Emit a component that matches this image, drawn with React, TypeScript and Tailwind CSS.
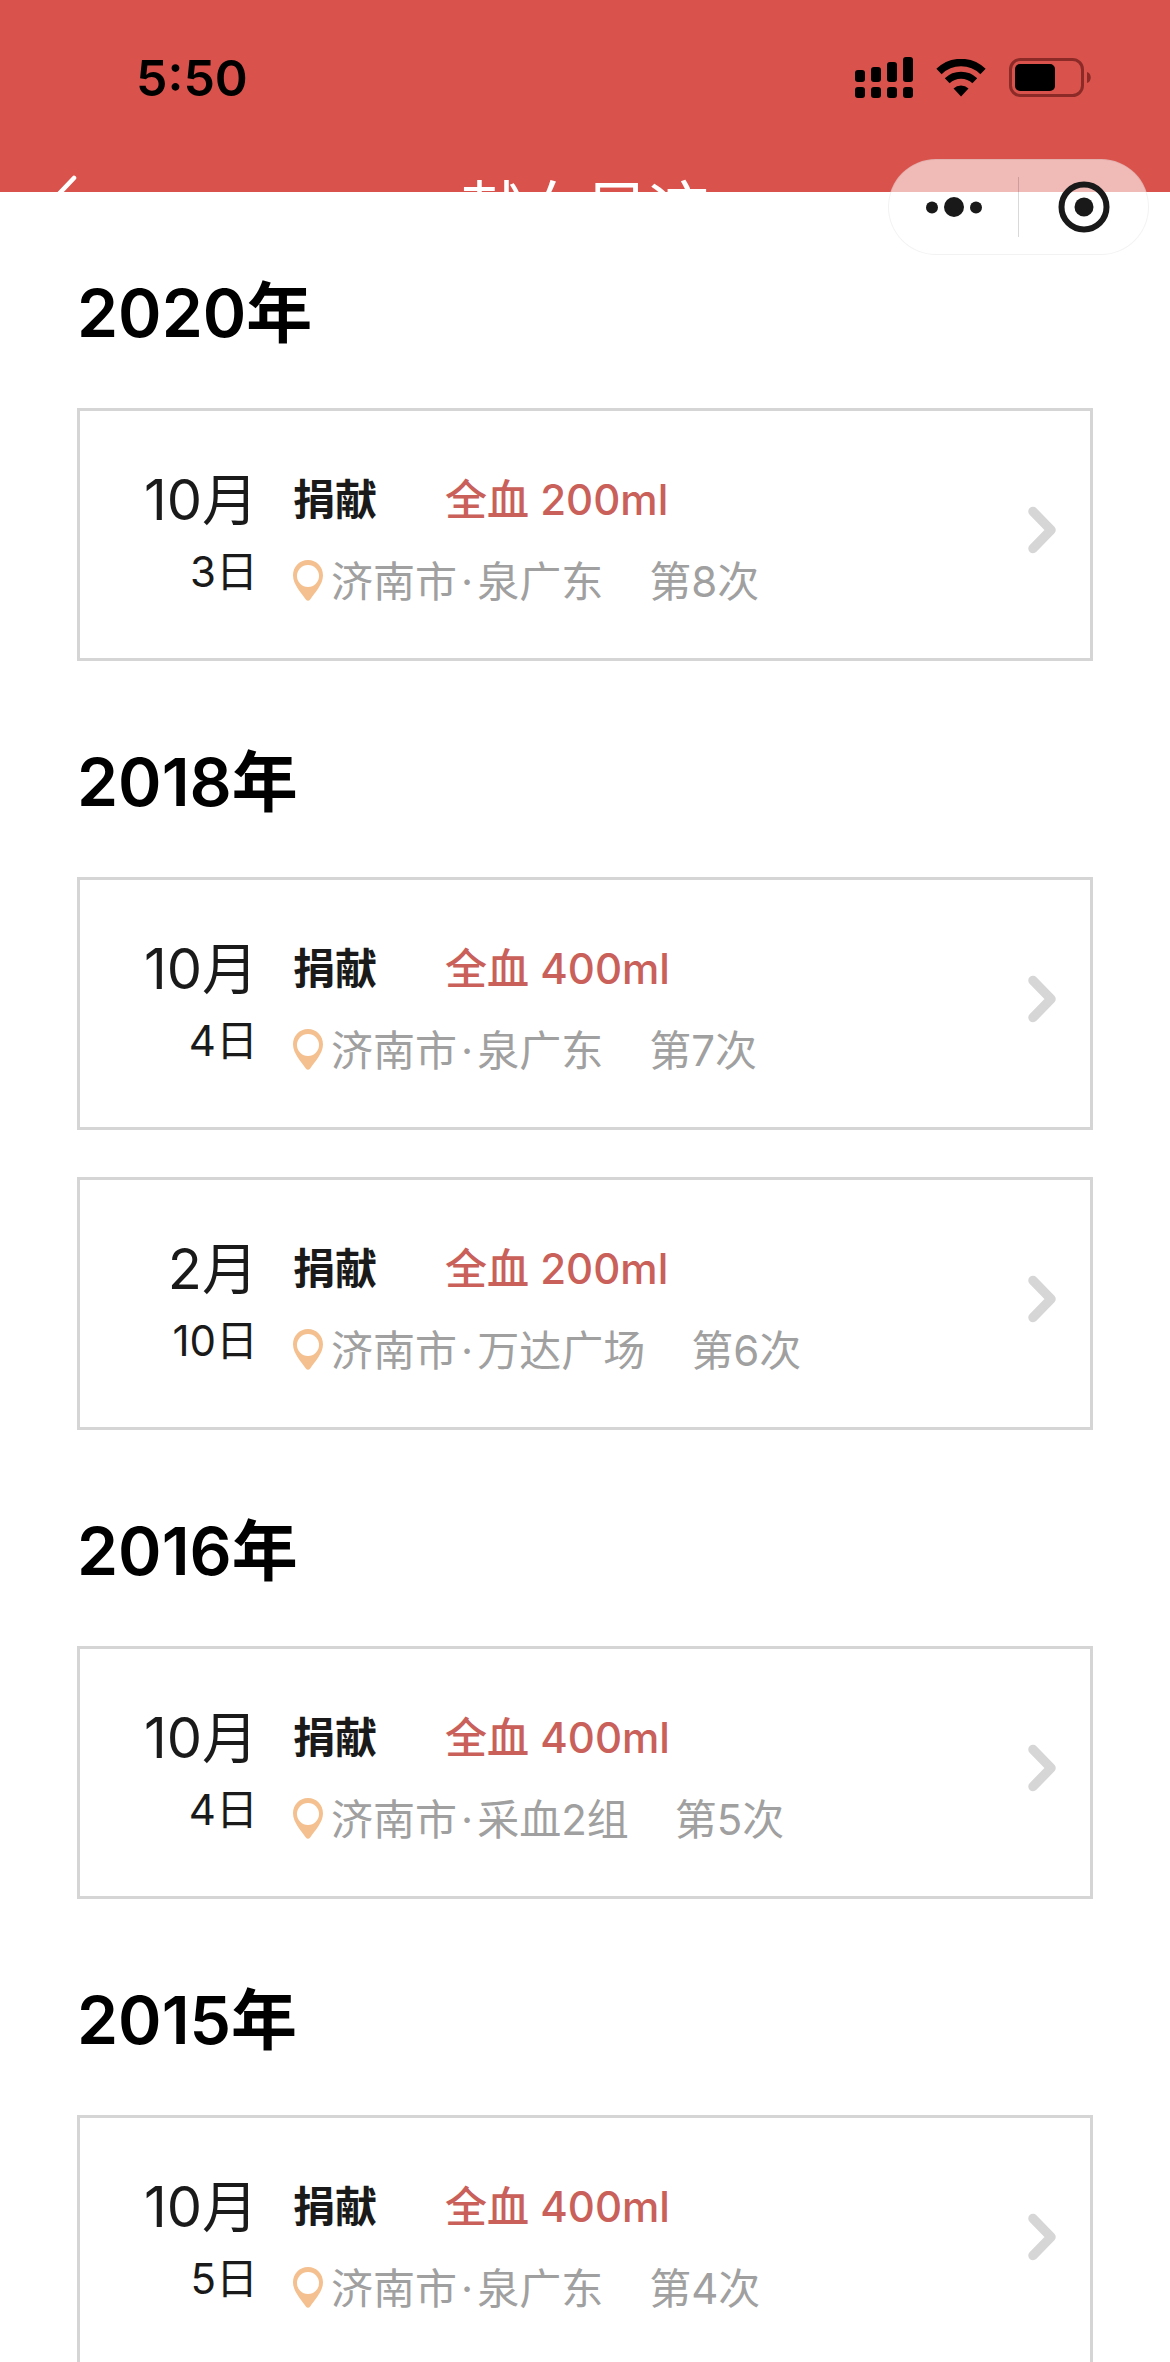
interface Donation {
  month: number;
  day: number;
  type: string;
  volume: number;
  city: string;
  place: string;
  count: number;
}

interface YearGroup {
  year: number;
  donations: Donation[];
}

const groups: YearGroup[] = [
  {
    year: 2020,
    donations: [{ month: 10, day: 3, type: '全血', volume: 200, city: '济南市', place: '泉广东', count: 8 }],
  },
  {
    year: 2018,
    donations: [
      { month: 10, day: 4, type: '全血', volume: 400, city: '济南市', place: '泉广东', count: 7 },
      { month: 2, day: 10, type: '全血', volume: 200, city: '济南市', place: '万达广场', count: 6 },
    ],
  },
  {
    year: 2016,
    donations: [{ month: 10, day: 4, type: '全血', volume: 400, city: '济南市', place: '采血2组', count: 5 }],
  },
  {
    year: 2015,
    donations: [{ month: 10, day: 5, type: '全血', volume: 400, city: '济南市', place: '泉广东', count: 4 }],
  },
];

const SignalIcon = () => (
  <svg width="58" height="42" viewBox="0 0 58 42" aria-hidden="true">
    <rect x="0" y="13" width="10" height="12" rx="3" />
    <rect x="16" y="10" width="10" height="15" rx="3" />
    <rect x="32" y="5" width="10" height="20" rx="3" />
    <rect x="48" y="0" width="10" height="25" rx="3" />
    <rect x="0" y="30" width="10" height="11" rx="3" />
    <rect x="16" y="30" width="10" height="11" rx="3" />
    <rect x="32" y="30" width="10" height="11" rx="3" />
    <rect x="48" y="30" width="10" height="11" rx="3" />
  </svg>
);

const WifiIcon = () => (
  <svg width="50" height="38" viewBox="0 0 50 38" aria-hidden="true">
    <path d="M3 12.5a31.5 31.5 0 0 1 44 0" fill="none" stroke="black" strokeWidth="7.5" />
    <path d="M11.2 21.7a20 20 0 0 1 27.6 0" fill="none" stroke="black" strokeWidth="7" />
    <path d="M25 37.5l-7.5-8a11 11 0 0 1 15 0z" />
  </svg>
);

const BatteryIcon = () => (
  <svg width="83" height="40" viewBox="0 0 83 40" aria-hidden="true">
    <rect x="1.5" y="1.5" width="72" height="36" rx="10" fill="none" stroke="#8c2a28" strokeWidth="3" />
    <rect x="6" y="6" width="40" height="27" rx="5" />
    <path d="M78 14c5 1 5 10 0 11z" fill="#8c2a28" />
  </svg>
);

const PinIcon = () => (
  <svg width="30" height="44" viewBox="0 0 30 44" aria-hidden="true">
    <path
      d="M15 0C6.500 0 0 6.700 0 15.500c0 9 8.500 17.500 12.800 24q2.200 2.500 4.400 0C21.500 33 30 24.500 30 15.500 30 6.700 23.500 0 15 0z"
      fill="#f4c08f"
    />
    <circle cx="15" cy="16" r="11" fill="white" />
  </svg>
);

const ChevronIcon = () => (
  <svg width="28" height="48" viewBox="0 0 28 48" aria-hidden="true">
    <path
      d="M5 5.5l18 18.5L5 42.5"
      fill="none"
      stroke="#d6d6d6"
      strokeWidth="9.5"
      strokeLinecap="round"
      strokeLinejoin="round"
    />
  </svg>
);

const StatusBar = () => (
  <div className="flex items-center justify-between pt-[52px] pr-[78px] pl-[136px]">
    <span className="text-[50px] leading-[52px] font-semibold text-black">5:50</span>
    <div className="flex items-center gap-[23px]">
      <SignalIcon />
      <WifiIcon />
      <BatteryIcon />
    </div>
  </div>
);

const Capsule = () => (
  <div className="absolute top-[159px] right-[21px] flex h-24 w-[261px] items-center rounded-full border border-black/5 bg-white/60">
    <button type="button" aria-label="更多" className="flex h-full flex-1 items-center justify-center">
      <svg width="58" height="22" viewBox="0 0 58 22" fill="#191919">
        <circle cx="7" cy="11.5" r="6" />
        <circle cx="29" cy="11" r="10" />
        <circle cx="51" cy="11.5" r="6" />
      </svg>
    </button>
    <span className="h-[60px] w-px bg-black/15" />
    <button type="button" aria-label="关闭" className="flex h-full flex-1 items-center justify-center">
      <svg width="52" height="52" viewBox="0 0 52 52">
        <circle cx="26" cy="26" r="22.5" fill="none" stroke="#191919" strokeWidth="6" />
        <circle cx="26" cy="26" r="9.5" fill="#191919" />
      </svg>
    </button>
  </div>
);

const DonationCard = ({ donation }: { donation: Donation }) => (
  <a
    href={`#donation-${donation.count}`}
    className="flex items-start border-3 border-[#d5d5d5] bg-white pt-12 pr-[34px] pb-[35px] text-[42px]"
  >
    <div className="w-[178px] pt-[5px] text-right text-[#1a1a1a]">
      <p className="text-[56px] leading-[72px]">{donation.month}月</p>
      <p className="leading-[72px]">{donation.day}日</p>
    </div>

    <div className="ml-[35px] flex-1 leading-[82px]">
      <p className="flex gap-[68px]">
        <span className="font-semibold text-[#1a1a1a]">捐献</span>
        <span className="font-medium text-[#c9605a]">
          {donation.type} {donation.volume}ml
        </span>
      </p>
      <p className="flex items-center text-[#a0a0a0]">
        <PinIcon />
        <span className="ml-2">{donation.city}</span>
        <span className="mx-1">·</span>
        <span>{donation.place}</span>
        <span className="ml-[46px]">第{donation.count}次</span>
      </p>
    </div>

    <div className="pt-[47px]">
      <ChevronIcon />
    </div>
  </a>
);

const App = () => {
  return (
    <div className="relative h-screen overflow-hidden bg-white font-[Inter,'Noto_Sans_CJK_SC',sans-serif]">
      <header className="h-48 overflow-hidden bg-[#d9534c]">
        <StatusBar />
        <div className="mt-[70px] grid grid-cols-3 items-start px-[50px] text-white">
          <button type="button" aria-label="返回" className="w-7">
            <svg width="28" height="48" viewBox="0 0 28 48" fill="none" stroke="white" strokeWidth="4.5">
              <path d="M24 4L5 24l19 20" strokeLinecap="round" strokeLinejoin="round" />
            </svg>
          </button>
          <h1 className="pt-[6px] text-center text-[62px] leading-[62px] whitespace-nowrap">献血足迹</h1>
        </div>
      </header>

      <Capsule />

      <main className="px-[77px]">
        {groups.map((group) => (
          <section key={group.year}>
            <h2 className="pt-[77px] pb-[51px] text-[66px] leading-[88px] font-semibold text-black">
              {group.year}年
            </h2>
            <div className="flex flex-col gap-[47px]">
              {group.donations.map((donation) => (
                <DonationCard key={donation.count} donation={donation} />
              ))}
            </div>
          </section>
        ))}
      </main>
    </div>
  );
};

export default App;
